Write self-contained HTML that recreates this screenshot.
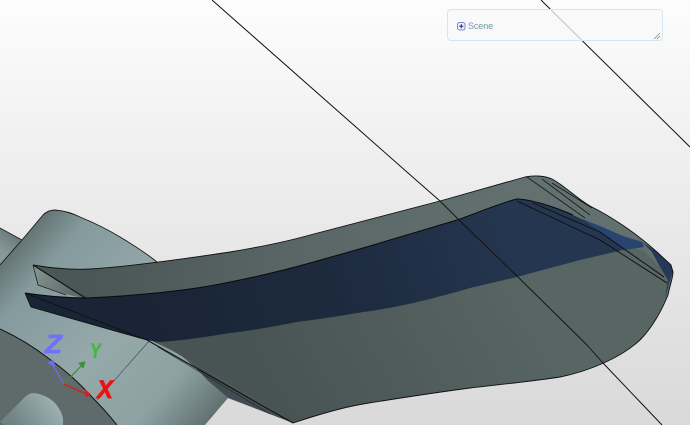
<!DOCTYPE html>
<html><head><meta charset="utf-8"><style>
html,body{margin:0;padding:0;width:690px;height:425px;overflow:hidden;background:#eee}
svg{position:absolute;left:0;top:0}
#p{position:absolute;left:446.5px;top:8.5px;width:214px;height:30px;border:1.5px solid #d2e7ef;border-radius:4px;background:rgba(248,248,248,.76)}
#t{position:absolute;left:468px;top:19.5px;font:9px/13px "Liberation Sans",sans-serif;color:#7097a8;letter-spacing:-.1px}
</style></head><body>
<svg width="690" height="425" viewBox="0 0 690 425" stroke-linejoin="round">
<defs>
<linearGradient id="bg" x1="0" y1="0" x2="0" y2="1"><stop offset="0" stop-color="#fdfdfd"/><stop offset=".45" stop-color="#ececec"/><stop offset="1" stop-color="#d9d9d9"/></linearGradient>
<linearGradient id="cy" gradientUnits="userSpaceOnUse" x1="22" y1="240" x2="218" y2="409"><stop offset="0" stop-color="#647475"/><stop offset=".14" stop-color="#859a9c"/><stop offset=".5" stop-color="#95a9ab"/><stop offset=".8" stop-color="#8da1a3"/><stop offset="1" stop-color="#627273"/></linearGradient>
<linearGradient id="bk" gradientUnits="userSpaceOnUse" x1="0" y1="250" x2="15" y2="232"><stop offset="0" stop-color="#87999a"/><stop offset="1" stop-color="#667677"/></linearGradient>
<linearGradient id="wing" gradientUnits="userSpaceOnUse" x1="280" y1="410" x2="520" y2="270"><stop offset="0" stop-color="#485454"/><stop offset="1" stop-color="#576563"/></linearGradient>
<linearGradient id="band" gradientUnits="userSpaceOnUse" x1="90" y1="0" x2="520" y2="0"><stop offset="0" stop-color="#4b5656"/><stop offset=".5" stop-color="#596766"/><stop offset="1" stop-color="#627070"/></linearGradient>
<linearGradient id="navy" gradientUnits="userSpaceOnUse" x1="150" y1="335" x2="510" y2="215"><stop offset="0" stop-color="#192536"/><stop offset=".5" stop-color="#1d2a3e"/><stop offset="1" stop-color="#253650"/></linearGradient>
<linearGradient id="sm" gradientUnits="userSpaceOnUse" x1="15" y1="425" x2="50" y2="400"><stop offset="0" stop-color="#6f8385"/><stop offset="1" stop-color="#9aadaf"/></linearGradient>
<linearGradient id="fl" gradientUnits="userSpaceOnUse" x1="36" y1="270" x2="70" y2="295"><stop offset="0" stop-color="#83938f"/><stop offset="1" stop-color="#5f6c6c"/></linearGradient>
</defs>
<rect width="690" height="425" fill="url(#bg)"/>
<path d="M212 0L416 180L440 201" stroke="#111" stroke-width="1" fill="none"/>
<path d="M603 363L662 425" stroke="#111" stroke-width="1" fill="none"/>
<path d="M541 0L690 147" stroke="#111" stroke-width="1" fill="none"/>

<!-- back cylinder -->
<path d="M0 228L22 240L0 265Z" fill="url(#bk)"/>
<path d="M0 228L22 240" stroke="#222" stroke-width=".9" fill="none"/>

<!-- main cylinder -->
<path d="M0 265L22 240L43 215Q48 210 55 210Q68 211 80 217Q102 226 120 237Q142 250 157 262L165 345L150 340Q165 347 180 355Q195 366 207 380L228 398L205 425L0 425Z" fill="url(#cy)"/>
<path d="M0 265L22 240L43 215Q48 210 55 210Q68 211 80 217Q102 226 120 237Q142 250 157 262" stroke="#1a1a1a" stroke-width=".9" fill="none"/>

<!-- dark end face -->
<path d="M0 329Q26 341 48 358Q72 375 90 395Q105 410 117 425L0 425Z" fill="#5f6b6b"/>
<path d="M0 329Q26 341 48 358Q72 375 90 395Q105 410 117 425" stroke="#111" stroke-width="1" fill="none"/>
<path d="M0 422L25 397Q29 393 34 393Q47 395 55 403Q61 410 63 418L63 425L5 425Z" fill="url(#sm)"/>
<path d="M150 340L97 400" stroke="#4a5556" stroke-width=".7" fill="none"/>

<!-- sliver below wing -->
<path d="M150 340Q165 347 180 355Q195 366 207 380L228 398L293 423L158 342Z" fill="#414d52"/>

<!-- lower wing -->
<path d="M158 342L293 423C320 414 345 407 363 404C400 398 440 392 470 388C505 384 535 381 560 377C590 371 622 357 640 340C652 328 662 310 668 295C670 285 673 278 673 272L671 265L657 252L640 240L600 235L500 250L300 300Z" fill="url(#wing)"/>
<!-- upper band -->
<path d="M33 265C50 268 70 270 90 269C125 267 190 258 230 252C260 247 285 242 310 235L440 201L525 177C535 175 545 176 552 179C565 186 575 197 590 206C610 216 635 232 657 252L660 267L643 250L600 240L517 215L457 235L363 262L310 275L230 292L150 300L87 299Z" fill="url(#band)"/>
<!-- small flap -->
<path d="M33 265L38 285L65 294L87 299Z" fill="url(#fl)"/>
<path d="M33 265L87 299" stroke="#111" stroke-width="1.1" fill="none"/>
<path d="M33 265L38 285L66 295" stroke="#222" stroke-width=".8" fill="none"/>

<!-- navy band -->
<path d="M25 293C45 296 65 298 87 298C130 296 190 291 230 282C260 276 285 270 310 263L363 248L457 220C480 212 500 203 517 199C530 199 555 207 573 215C595 225 620 238 643 247L623 250L580 260L517 277L470 288C450 294 430 299 413 303C395 307 380 310 363 312C340 316 320 319 297 322C270 327 250 331 230 333C205 337 180 341 158 342L147 340L31 307Z" fill="url(#navy)"/>
<path d="M582 219L600 226L623 236L642 242L644 247L624 250L606 236Z" fill="#2a4470"/>
<!-- nose -->
<path d="M642 242L657 252L671 265L673 272L670 280L665 298L668 280L660 267L652 252Z" fill="#25385a"/>

<!-- outlines -->
<path d="M33 265C50 268 70 270 90 269C125 267 190 258 230 252C260 247 285 242 310 235L440 201L525 177C535 175 545 176 552 179C565 186 575 197 590 206C610 216 635 232 657 252L671 265L673 272C673 278 670 285 668 295C662 310 652 328 640 340C622 357 590 371 560 377C535 381 505 384 470 388C440 392 400 398 363 404C345 407 320 414 293 423" stroke="#111" stroke-width=".9" fill="none"/>
<path d="M25 293C45 296 65 298 87 298C130 296 190 291 230 282C260 276 285 270 310 263L363 248L457 220C480 212 500 203 517 199C530 199 555 207 573 215" stroke="#0a0a0a" stroke-width="1" fill="none"/>
<path d="M25 293L31 307L147 340M25 293L147 340" stroke="#0e0e0e" stroke-width=".9" fill="none"/>
<path d="M147 340L293 423" stroke="#111" stroke-width="1.1" fill="none"/>
<path d="M158 347L270 414" stroke="#222" stroke-width=".6" fill="none"/>
<path d="M440 201L460 221L518 277L587 345L603 363" stroke="#111" stroke-width=".9" fill="none"/>
<path d="M517 201L600 240L667 283" stroke="#0c0c0c" stroke-width=".9" fill="none"/>
<path d="M533 203L600 232L664 277" stroke="#0c0c0c" stroke-width=".9" fill="none"/>
<path d="M527 177L585 218M542 179L590 215M552 183L592 208" stroke="#1a1a1a" stroke-width=".8" fill="none"/>

<!-- gizmo -->
<path d="M64 384L52 364" stroke="#6c6cf0" stroke-width="1.2"/><path d="M48 363L53 360L55 366Z" fill="#6c6cf0" stroke="#6c6cf0"/>
<path d="M64 384L82 365" stroke="#3d8f3d" stroke-width="1.2"/><path d="M79 363L85 362L83 368Z" fill="#3d8f3d" stroke="#3d8f3d"/>
<path d="M64 384L86 394" stroke="#d61e1e" stroke-width="1.4"/><path d="M85 390L90 394L86 397Z" fill="#d61e1e" stroke="#d61e1e"/>
<text x="45" y="353" font-family="Liberation Sans,sans-serif" font-weight="700" font-style="italic" font-size="26" textLength="17" lengthAdjust="spacingAndGlyphs" fill="#7070ff" stroke="#7070ff" stroke-width=".7">Z</text>
<text x="90" y="358" font-family="Liberation Sans,sans-serif" font-weight="700" font-style="italic" font-size="21" textLength="11" lengthAdjust="spacingAndGlyphs" fill="#45b845" stroke="#45b845" stroke-width=".6">Y</text>
<text x="97" y="398" font-family="Liberation Sans,sans-serif" font-weight="700" font-style="italic" font-size="25" textLength="16" lengthAdjust="spacingAndGlyphs" fill="#ee1111" stroke="#ee1111" stroke-width=".8">X</text>
</svg>
<div id="p"></div>
<svg width="690" height="425" style="pointer-events:none">
<rect x="457.5" y="22.5" width="7.5" height="7.5" rx="2" fill="#eef0fa" stroke="#8286cc"/>
<path d="M459.2 26.2H463.4M461.3 24.1V28.4" stroke="#22229a" stroke-width="1"/>
<path d="M654 39L660 33M657 39L660 36" stroke="#888" stroke-width=".8"/>
</svg>
<div id="t">Scene</div>
</body></html>
